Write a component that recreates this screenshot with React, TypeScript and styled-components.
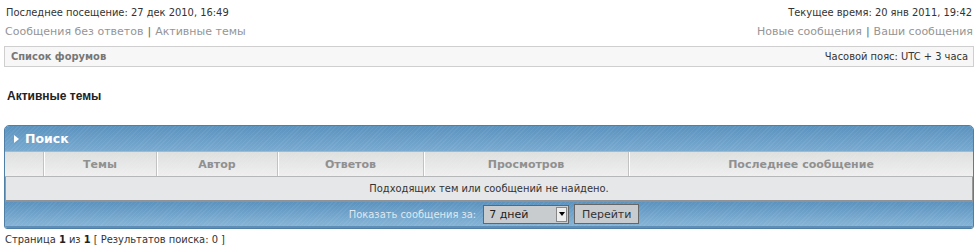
import styled, { createGlobalStyle } from 'styled-components'

const GlobalStyle = createGlobalStyle`
  body {
    margin: 0;
    background: #fff;
    font-family: 'DejaVu Sans Condensed', 'DejaVu Sans', sans-serif;
    font-size: 11px;
    color: #333;
  }
`

const stripes = `repeating-linear-gradient(
  135deg,
  rgba(255, 255, 255, 0.06) 0px,
  rgba(255, 255, 255, 0.06) 1px,
  rgba(0, 0, 0, 0) 1px,
  rgba(0, 0, 0, 0) 3px
)`

const Page = styled.div`
  width: 979px;
  padding: 0 5px 0 4px;
  box-sizing: border-box;
`

const InfoRow = styled.div`
  display: flex;
  justify-content: space-between;
  align-items: center;
  height: ${({ $h }: { $h: number }) => $h}px;
`

const InfoText = styled.span`
  padding: 0 2px;
  color: #333;
`

const Links = styled.div`
  font-family: 'DejaVu Sans', sans-serif;
  color: #999;
  padding: 0 1px;
`

const LinkA = styled.a`
  color: #959595;
  text-decoration: none;
`

const Sep = styled.span`
  color: #666;
  margin: 0 4px;
`

const NavBar = styled.div`
  margin-top: 8px;
  height: 19px;
  border: 1px solid #cfcfcf;
  background: #f7f7f7;
  display: flex;
  align-items: center;
  justify-content: space-between;
  padding: 0 5px 0 6px;
`

const NavTitle = styled.span`
  font-weight: bold;
  color: #777;
`

const Heading = styled.h2`
  margin: 22px 0 0 3px;
  font-family: 'Liberation Sans', sans-serif;
  font-size: 12px;
  font-weight: bold;
  color: #222;
  height: 16px;
`

const Panel = styled.div`
  margin-top: 20px;
  border: 1px solid #4f7fa6;
  border-radius: 5px 5px 3px 3px;
  overflow: hidden;
`

const PanelHead = styled.div`
  height: 25px;
  display: flex;
  align-items: center;
  gap: 6px;
  padding-left: 9px;
  background: ${stripes}, linear-gradient(#5b93bf, #79aad0);
  color: #fff;
  font-family: 'DejaVu Sans', sans-serif;
  font-size: 12.5px;
  font-weight: bold;
  border-bottom: 1px solid #9bbcd6;
`

const Arrow = styled.span`
  width: 0;
  height: 0;
  border-top: 4px solid transparent;
  border-bottom: 4px solid transparent;
  border-left: 5px solid #fff;
`

const ColGrid = styled.div`
  display: grid;
  grid-template-columns: 38px 113px 121px 146px 205px 1fr;
  height: 24px;
  background: ${stripes}, linear-gradient(#dedfdf, #efefef);
  border-bottom: 1px solid #b5b7b8;
`

const ColHead = styled.div`
  display: flex;
  align-items: center;
  justify-content: center;
  font-family: 'DejaVu Sans', sans-serif;
  font-weight: bold;
  color: #909090;
  border-left: 1px solid #c2c2c2;
  box-shadow: inset 1px 0 0 #fff;
  &:first-child {
    border-left: 0;
    box-shadow: none;
  }
`

const EmptyRow = styled.div`
  height: 23px;
  background: #e5e7e8;
  display: flex;
  align-items: center;
  justify-content: center;
  color: #333;
  border-left: 1px solid #9a9a9a;
  border-right: 1px solid #9a9a9a;
  border-bottom: 2px solid #8f9296;
`

const PanelFoot = styled.div`
  height: 24px;
  display: flex;
  align-items: center;
  justify-content: center;
  gap: 5px;
  padding-left: 10px;
  background: ${stripes}, linear-gradient(#5b93bf, #86b4d6);
  border-bottom: 2px solid #5f8fb6;
`

const FootLabel = styled.span`
  color: #dfe8f0;
  margin-right: 2px;
`

const Select = styled.div`
  width: 86px;
  height: 19px;
  box-sizing: border-box;
  border: 1px solid #666;
  background: #c9ccce;
  display: flex;
  align-items: center;
  justify-content: space-between;
  padding-left: 5px;
  color: #222;
  font-family: 'DejaVu Sans', sans-serif;
`

const SelectBtn = styled.span`
  width: 11px;
  height: 15px;
  margin-right: 1px;
  background: #eee;
  border: 1px solid #888;
  box-sizing: border-box;
  display: flex;
  align-items: center;
  justify-content: center;
  &::after {
    content: '';
    border-left: 3px solid transparent;
    border-right: 3px solid transparent;
    border-top: 4px solid #000;
  }
`

const Button = styled.button`
  height: 20px;
  width: 65px;
  border: 1px solid #666;
  background: #c9ccce;
  color: #333;
  font-family: 'DejaVu Sans', sans-serif;
  font-size: 11px;
  padding: 0;
`

const Pager = styled.div`
  margin-top: 4px;
  padding-left: 1px;
  color: #333;
  b {
    color: #222;
  }
`

const columns = ['', 'Темы', 'Автор', 'Ответов', 'Просмотров', 'Последнее сообщение']

const App = () => {
  return (
    <Page>
      <GlobalStyle />
      <InfoRow $h={24}>
        <InfoText>Последнее посещение: 27 дек 2010, 16:49</InfoText>
        <InfoText>Текущее время: 20 янв 2011, 19:42</InfoText>
      </InfoRow>
      <InfoRow $h={14}>
        <Links>
          <LinkA href="#">Сообщения без ответов</LinkA>
          <Sep>|</Sep>
          <LinkA href="#">Активные темы</LinkA>
        </Links>
        <Links>
          <LinkA href="#">Новые сообщения</LinkA>
          <Sep>|</Sep>
          <LinkA href="#">Ваши сообщения</LinkA>
        </Links>
      </InfoRow>
      <NavBar>
        <NavTitle>Список форумов</NavTitle>
        <span>Часовой пояс: UTC + 3 часа</span>
      </NavBar>
      <Heading>Активные темы</Heading>
      <Panel>
        <PanelHead>
          <Arrow />
          Поиск
        </PanelHead>
        <ColGrid>
          {columns.map((c, i) => (
            <ColHead key={`col-${i}`}>{c}</ColHead>
          ))}
        </ColGrid>
        <EmptyRow>Подходящих тем или сообщений не найдено.</EmptyRow>
        <PanelFoot>
          <FootLabel>Показать сообщения за:</FootLabel>
          <Select>
            7 дней
            <SelectBtn />
          </Select>
          <Button>Перейти</Button>
        </PanelFoot>
      </Panel>
      <Pager>
        Страница <b>1</b> из <b>1</b> [ Результатов поиска: 0 ]
      </Pager>
    </Page>
  )
}

export default App
